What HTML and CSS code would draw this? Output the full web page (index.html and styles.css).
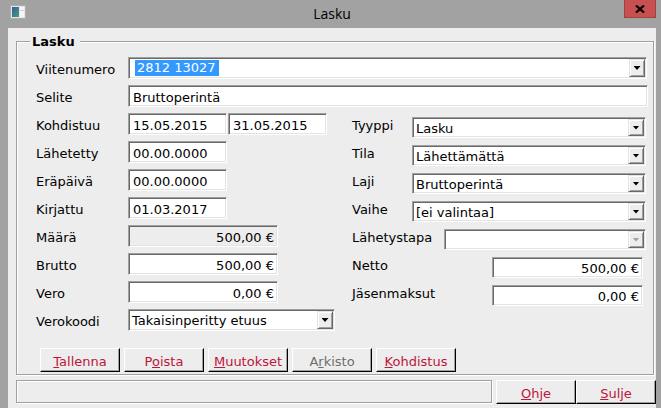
FILE: index.html
```html
<!DOCTYPE html>
<html lang="fi">
<head>
<meta charset="utf-8">
<title>Lasku</title>
<link rel="stylesheet" href="styles.css">
</head>
<body>
<div class="window">
  <div class="titlebar">
    <svg class="app-icon" width="16" height="14" viewBox="0 0 16 14">
      <defs>
        <linearGradient id="ig" x1="0" y1="0" x2="1" y2="1">
          <stop offset="0" stop-color="#2f5d98"/>
          <stop offset="1" stop-color="#4c9c7c"/>
        </linearGradient>
      </defs>
      <rect x="0.5" y="0.5" width="15" height="13" fill="#e6e6e6" stroke="#a9adb2"/>
      <rect x="2" y="2" width="7" height="10" fill="url(#ig)"/>
      <rect x="10" y="2" width="4" height="10" fill="#f6f6f6"/>
      <rect x="10" y="5" width="4" height="1" fill="#cfcfcf"/>
    </svg>
    <div class="title">Lasku</div>
    <div class="close">
      <svg width="10" height="8" viewBox="0 0 10 8"><path d="M1 0.5L9 7.5M9 0.5L1 7.5" stroke="#000" stroke-width="2.2"/></svg>
    </div>
  </div>
  <div class="client">
    <div class="group">
      <span class="group-title">Lasku</span>
      <div class="row">
        <span class="lbl">Viitenumero</span>
        <div class="combo w-viite"><span class="ctext"><span class="sel">2812 13027</span></span><span class="drop"></span></div>
      </div>
      <div class="row">
        <span class="lbl">Selite</span>
        <div class="field w-selite">Bruttoperintä</div>
      </div>
      <div class="columns">
        <div class="col-left">
          <div class="row">
            <span class="lbl">Kohdistuu</span>
            <div class="field w-date">15.05.2015</div>
            <div class="field w-date second">31.05.2015</div>
          </div>
          <div class="row"><span class="lbl">Lähetetty</span><div class="field w-date">00.00.0000</div></div>
          <div class="row"><span class="lbl">Eräpäivä</span><div class="field w-date">00.00.0000</div></div>
          <div class="row"><span class="lbl">Kirjattu</span><div class="field w-date">01.03.2017</div></div>
          <div class="row"><span class="lbl">Määrä</span><div class="field num disabled w-amt">500,00 €</div></div>
          <div class="row"><span class="lbl">Brutto</span><div class="field num w-amt">500,00 €</div></div>
          <div class="row"><span class="lbl">Vero</span><div class="field num w-amt">0,00 €</div></div>
          <div class="row">
            <span class="lbl">Verokoodi</span>
            <div class="combo w-vero"><span class="ctext">Takaisinperitty etuus</span><span class="drop"></span></div>
          </div>
        </div>
        <div class="col-right">
          <div class="row r"><span class="rlbl">Tyyppi</span><div class="combo w-rc"><span class="ctext">Lasku</span><span class="drop"></span></div></div>
          <div class="row r"><span class="rlbl">Tila</span><div class="combo w-rc"><span class="ctext">Lähettämättä</span><span class="drop"></span></div></div>
          <div class="row r"><span class="rlbl">Laji</span><div class="combo w-rc"><span class="ctext">Bruttoperintä</span><span class="drop"></span></div></div>
          <div class="row r"><span class="rlbl">Vaihe</span><div class="combo w-rc"><span class="ctext">[ei valintaa]</span><span class="drop"></span></div></div>
          <div class="row r"><span class="rlbl wide">Lähetystapa</span><div class="combo w-tapa"><span class="ctext"></span><span class="drop off"></span></div></div>
          <div class="row r"><span class="rlbl wider">Netto</span><div class="field num w-netto">500,00 €</div></div>
          <div class="row r"><span class="rlbl wider">Jäsenmaksut</span><div class="field num w-netto">0,00 €</div></div>
        </div>
      </div>
      <div class="buttons">
        <button class="btn"><u>T</u>allenna</button>
        <button class="btn">P<u>o</u>ista</button>
        <button class="btn"><u>M</u>uutokset</button>
        <button class="btn dis">A<u>r</u>kisto</button>
        <button class="btn"><u>K</u>ohdistus</button>
      </div>
    </div>
    <div class="footer">
      <div class="status"></div>
      <button class="btn"><u>O</u>hje</button>
      <button class="btn"><u>S</u>ulje</button>
    </div>
  </div>
</div>
</body>
</html>
```

FILE: styles.css
```css
html, body {
  margin: 0;
  padding: 0;
}
body {
  width: 661px;
  height: 408px;
  overflow: hidden;
  background: #a2a2a2;
  font-family: "DejaVu Sans", sans-serif;
  font-size: 13px;
  color: #000;
}
.window {
  display: flex;
  flex-direction: column;
  height: 408px;
}
.titlebar {
  height: 28px;
  flex: none;
  display: flex;
  align-items: flex-start;
}
.app-icon {
  flex: none;
  margin: 5px 0 0 10px;
}
.title {
  flex: 1;
  text-align: center;
  padding: 5px 0 0 14px;
  font-family: "Open Sans", "Noto Sans", sans-serif;
  font-size: 14px;
  line-height: 18px;
  color: #000;
}
.close {
  flex: none;
  width: 32px;
  height: 18px;
  margin-right: 5px;
  box-sizing: border-box;
  background: #c75050;
  border: 1px solid #a34040;
  border-top: none;
  display: flex;
  align-items: center;
  justify-content: center;
}
.client {
  flex: 1;
  margin: 0 5px 0 8px;
  background: #ededed;
  padding: 13px 2px 0 8px;
}
.group {
  position: relative;
  border: 1px solid #a0a0a0;
  box-shadow: inset 1px 1px #fff, 1px 1px #fff;
  padding: 15px 0 2px 19px;
  display: flex;
  flex-direction: column;
  gap: 6px;
}
.group-title {
  position: absolute;
  top: -8px;
  left: 13px;
  padding: 0 5px 0 2px;
  background: #ededed;
  font-weight: bold;
  line-height: 15px;
}
.row {
  display: flex;
  height: 22px;
}
.row.r {
  height: 21px;
}
.lbl {
  width: 92px;
  flex: none;
  padding-top: 5px;
  line-height: 15px;
  white-space: nowrap;
}
.rlbl {
  width: 60px;
  flex: none;
  padding-top: 1px;
  line-height: 16px;
  white-space: nowrap;
}
.rlbl.wide { width: 92px; }
.rlbl.wider { width: 140px; }

.field {
  box-sizing: border-box;
  height: 100%;
  flex: none;
  background: #fff;
  border: 1px solid;
  border-color: #a0a0a0 #fff #fff #a0a0a0;
  box-shadow: inset 1px 1px #696969, inset -1px -1px #e3e3e3;
  padding: 3px 4px 0;
  line-height: 17px;
  white-space: nowrap;
  overflow: hidden;
}
.row.r .field { padding-top: 2px; }
.field.second { margin-left: 1px; }
.field.num {
  text-align: right;
  padding-right: 3px;
}
.field.disabled { background: #ededed; }

.w-viite { width: 519px; }
.w-selite { width: 520px; }
.w-date { width: 99px; }
.w-amt { width: 150px; }
.w-vero { width: 207px; }
.w-rc { width: 234px; }
.w-tapa { width: 202px; }
.w-netto { width: 151px; }

.combo {
  box-sizing: border-box;
  height: 100%;
  flex: none;
  display: flex;
  background: #fff;
  border: 1px solid;
  border-color: #a0a0a0 #fff #fff #a0a0a0;
  box-shadow: inset 1px 1px #696969, inset -1px -1px #e3e3e3;
  padding: 1px;
}
.ctext {
  flex: 1;
  padding: 1px 0 0 2px;
  line-height: 17px;
  white-space: nowrap;
  overflow: hidden;
}
.sel {
  display: inline-block;
  vertical-align: top;
  margin: 0 0 0 3px;
  padding: 0 3px 0 2px;
  line-height: 16px;
  background: #3399ff;
  color: #fff;
}
.drop {
  flex: none;
  width: 16px;
  box-sizing: border-box;
  background: #ededed;
  border: 1px solid;
  border-color: #e3e3e3 #696969 #696969 #e3e3e3;
  box-shadow: inset 1px 1px #fff, inset -1px -1px #a0a0a0;
  display: flex;
  align-items: center;
  justify-content: center;
}
.drop::after {
  content: "";
  width: 7px;
  height: 4px;
  background: #000;
  clip-path: polygon(0 0, 100% 0, 50% 100%);
}
.drop.off::after { background: #a0a0a0; }

.columns {
  display: flex;
}
.col-left {
  width: 316px;
  flex: none;
  display: flex;
  flex-direction: column;
  gap: 6px;
}
.col-right {
  flex: 1;
  padding-top: 4px;
  display: flex;
  flex-direction: column;
  gap: 7px;
}
.buttons {
  display: flex;
  gap: 4px;
  margin: 11px 0 0 4px;
}
.btn {
  box-sizing: border-box;
  width: 80px;
  height: 24px;
  margin: 0;
  padding: 3px 0 0;
  background: #ededed;
  border: 1px solid;
  border-color: #fff #000 #000 #fff;
  border-radius: 0;
  box-shadow: inset -1px -1px #a0a0a0;
  font-family: "DejaVu Sans", sans-serif;
  font-size: 13px;
  line-height: 17px;
  color: #c0143c;
  text-align: center;
  vertical-align: top;
}
.btn.dis { color: #6d6d6d; }
.btn u { text-underline-offset: 1px; }

.footer {
  display: flex;
  height: 24px;
  margin: 5px -2px 0 0;
}
.status {
  box-sizing: border-box;
  width: 476px;
  height: 23px;
  margin-right: 4px;
  border: 1px solid #a0a0a0;
  box-shadow: inset 1px 1px #fff, 1px 1px #fff;
}
```
